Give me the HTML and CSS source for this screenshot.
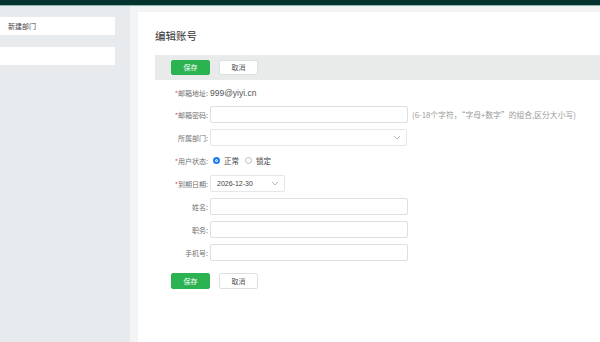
FILE: index.html
```html
<!DOCTYPE html>
<html lang="zh">
<head>
<meta charset="utf-8">
<link rel="stylesheet" href="styles.css">
</head>
<body>
<div class="topbar"></div>
<div class="layout">
  <aside class="sidebar">
    <div class="side-item">新建部门</div>
    <div class="side-item"></div>
  </aside>
  <main class="main">
    <div class="panel">
      <h1 class="title">编辑账号</h1>
      <div class="toolbar">
        <button class="btn btn-primary">保存</button>
        <button class="btn btn-default">取消</button>
      </div>
      <div class="form">
        <div class="row row-email">
          <label class="label"><span class="req">*</span>邮箱地址:</label>
          <span class="value">999@yiyi.cn</span>
        </div>
        <div class="row">
          <label class="label"><span class="req">*</span>邮箱密码:</label>
          <input class="input" type="password">
          <span class="hint">(6-18个字符，“字母+数字”的组合,区分大小写)</span>
        </div>
        <div class="row">
          <label class="label">所属部门:</label>
          <div class="select">
            <svg class="chev" width="8" height="5" viewBox="0 0 8 5"><path d="M1 1l3 3 3-3" fill="none" stroke="#b8bcc2" stroke-width="1"/></svg>
          </div>
        </div>
        <div class="row row-status">
          <label class="label"><span class="req">*</span>用户状态:</label>
          <span class="radio radio-on"></span><span class="radio-text">正常</span>
          <span class="radio"></span><span class="radio-text">锁定</span>
        </div>
        <div class="row">
          <label class="label"><span class="req">*</span>到期日期:</label>
          <div class="select select-date">
            <span class="date-text">2026-12-30</span>
            <svg class="chev" width="8" height="5" viewBox="0 0 8 5"><path d="M1 1l3 3 3-3" fill="none" stroke="#b8bcc2" stroke-width="1"/></svg>
          </div>
        </div>
        <div class="row">
          <label class="label">姓名:</label>
          <input class="input" type="text">
        </div>
        <div class="row">
          <label class="label">职务:</label>
          <input class="input" type="text">
        </div>
        <div class="row">
          <label class="label">手机号:</label>
          <input class="input" type="text">
        </div>
      </div>
      <div class="actions">
        <button class="btn btn-primary btn-lg">保存</button>
        <button class="btn btn-default btn-lg">取消</button>
      </div>
    </div>
  </main>
</div>
</body>
</html>
```
FILE: styles.css
```css
* { box-sizing: border-box; }
html, body {
  margin: 0;
  padding: 0;
  width: 600px;
  height: 342px;
  overflow: hidden;
  font-family: "Noto Sans CJK SC", "Liberation Sans", sans-serif;
  color: #555;
  background: #f2f3f5;
}
.topbar {
  height: 6px;
  background: #04332f;
  border-bottom: 1px solid #8fb5ad;
}
.layout {
  display: flex;
  height: 336px;
}
.sidebar {
  width: 130px;
  flex: none;
  background: #e8ebee;
  padding-top: 11px;
  display: flex;
  flex-direction: column;
  gap: 12px;
}
.side-item {
  width: 115px;
  height: 18px;
  background: #fff;
  font-size: 7px;
  line-height: 18px;
  padding-left: 8px;
  color: #444;
}
.main {
  flex: 1;
  background: #f3f4f6;
  padding: 6px 0 0 8px;
  display: flex;
}
.panel {
  flex: 1;
  background: #fff;
  padding: 17px 0 0 17px;
}
.title {
  margin: 0;
  font-size: 10.5px;
  font-weight: normal;
  line-height: 14px;
  color: #333;
  height: 14px;
}
.toolbar {
  margin-top: 12px;
  height: 25px;
  background: #e9eaea;
  display: flex;
  align-items: center;
  padding-left: 16px;
  gap: 9px;
}
.btn {
  font-family: inherit;
  font-size: 7px;
  height: 15px;
  width: 39px;
  padding: 0;
  border-radius: 2px;
  cursor: pointer;
  line-height: 13px;
}
.btn-lg { height: 16px; }
.btn-primary {
  background: #2cb351;
  border: 1px solid #2cb351;
  color: #fff;
}
.btn-default {
  background: #fff;
  border: 1px solid #dcdfe3;
  color: #555;
}
.form {
  margin-top: 6px;
  display: flex;
  flex-direction: column;
  gap: 6px;
}
.row {
  display: flex;
  align-items: center;
  height: 17px;
}
.row-email { height: 14px; }
.row-status { height: 17px; }
.label {
  width: 55px;
  flex: none;
  text-align: right;
  font-size: 7px;
  color: #707070;
  padding-right: 2px;
}
.req { color: #e5484d; }
.value {
  font-family: "Liberation Sans", sans-serif;
  font-size: 8.5px;
  color: #555;
}
.input {
  width: 198px;
  height: 17px;
  border: 1px solid #dcdfe3;
  border-radius: 2px;
  padding: 0 4px;
  font-size: 8px;
  outline: none;
}
.hint {
  margin-left: 4px;
  font-size: 7.8px;
  color: #999;
  white-space: nowrap;
}
.select {
  width: 197px;
  height: 17px;
  border: 1px solid #e4e6ea;
  border-radius: 2px;
  display: flex;
  align-items: center;
  justify-content: flex-end;
  padding-right: 5px;
}
.select-date {
  width: 75px;
  justify-content: space-between;
  padding-left: 6px;
}
.date-text {
  font-family: "Liberation Sans", sans-serif;
  font-size: 7px;
  color: #444;
}
.radio {
  width: 7px;
  height: 7px;
  border-radius: 50%;
  border: 1px solid #b8bcc2;
  margin-left: 3px;
  margin-right: 4px;
  flex: none;
}
.radio-on {
  border: 2px solid #1e7cf0;
  background: #1e7cf0;
  box-shadow: inset 0 0 0 1px #fff;
}
.radio-text {
  font-size: 7.5px;
  color: #444;
  margin-right: 3px;
}
.actions {
  margin-top: 12px;
  padding-left: 16px;
  display: flex;
  gap: 9px;
}
```
